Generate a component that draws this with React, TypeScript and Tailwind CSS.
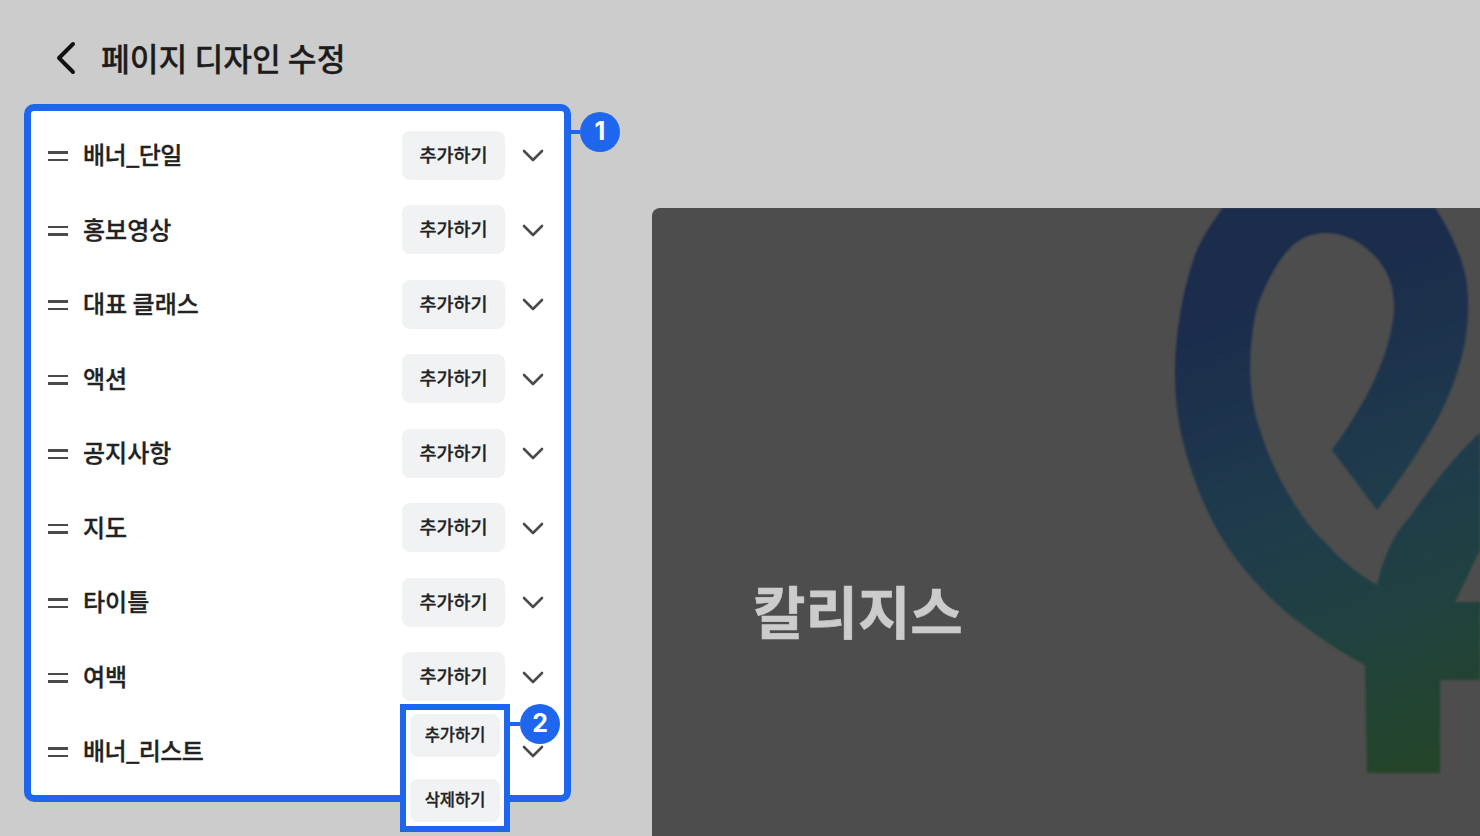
const sections = ["배너_단일", "홍보영상", "대표 클래스", "액션", "공지사항", "지도", "타이틀", "여백", "배너_리스트"];

function Chevron() {
  return (
    <svg width="24" height="24" viewBox="0 0 24 24" fill="none" stroke="#4b4b4b" strokeWidth="2.6" strokeLinecap="round" strokeLinejoin="round">
      <path d="M3 8 12 17 21 8" />
    </svg>
  );
}

function Badge({ n }: { n: number }) {
  return (
    <div className="flex h-10 w-10 items-center justify-center rounded-full bg-[#1f66ee] font-['Inter',sans-serif] text-[25px] font-bold text-white">
      {n}
    </div>
  );
}

function Row({ label, last }: { label: string; last?: boolean }) {
  return (
    <div className="flex h-[74.5px] items-center">
      <div className="mt-[2px] flex w-[20px] flex-col gap-[5px]">
        <div className="h-[2.5px] bg-[#4a4a4a]" />
        <div className="h-[2.5px] bg-[#4a4a4a]" />
      </div>
      <span className={`ml-[15px] pb-[2px] text-[24px] font-medium text-[#222222] [-webkit-text-stroke:0.3px_#222222] ${label.includes("_") ? "tracking-[-0.6px]" : ""}`}>
        {label}
      </span>
      <div className="ml-auto h-[49px] w-[103px]">
        {!last && (
          <button className="h-full w-full rounded-lg bg-[#f1f2f4] pb-[1px] text-[18.5px] font-medium text-[#222222] [-webkit-text-stroke:0.3px_#222222]">
            추가하기
          </button>
        )}
      </div>
      <div className="ml-[16px] flex w-[24px] justify-center">
        <Chevron />
      </div>
    </div>
  );
}

function Logo() {
  return (
    <svg className="absolute inset-0 h-full w-full blur-[0.8px]" viewBox="652 208 828 628" preserveAspectRatio="none">
      <defs>
        <linearGradient id="ribbon" gradientUnits="userSpaceOnUse" x1="1250" y1="300" x2="1420" y2="760">
          <stop offset="0" stopColor="#1b2c4c" />
          <stop offset="0.45" stopColor="#1f3c4c" />
          <stop offset="0.7" stopColor="#204240" />
          <stop offset="1" stopColor="#24452a" />
        </linearGradient>
      </defs>
      <path
        fill="url(#ribbon)"
        d="M1377 510 L1332 450 C1350 425 1385 375 1393 320 C1398 285 1385 262 1362 245 C1345 233 1320 228 1300 240 C1280 252 1265 285 1257 307 C1248 345 1247 395 1260 430 C1272 470 1300 520 1325 542 C1340 560 1360 575 1377 585 C1383 560 1392 535 1410 517 C1425 495 1455 455 1480 433 L1480 550 L1455 602 L1480 602 L1480 680 L1440 680 L1440 773 L1367 773 L1365 665 C1345 655 1315 635 1287 613 C1255 585 1225 550 1207 510 C1185 460 1175 420 1175 373 C1175 330 1185 280 1197 250 C1205 232 1218 215 1228 200 L1430 200 C1445 222 1468 260 1468 300 C1470 350 1450 395 1437 420 C1420 450 1400 480 1377 510 Z"
      />
    </svg>
  );
}

export default function App() {
  return (
    <div className="h-[836px] w-[1480px] overflow-hidden bg-[#cccccc] font-['Noto_Sans_CJK_KR','Noto_Sans',sans-serif]">
      <header className="flex h-[104px] items-start pl-[53px] pt-[34px]">
        <svg width="24" height="48" viewBox="0 0 24 48" fill="none" stroke="#111111" strokeWidth="4" strokeLinecap="round" strokeLinejoin="round">
          <path d="M20 10 6 24 20 38" />
        </svg>
        <h1 className="ml-[24px] text-[31.3px] leading-[48px] font-medium text-[#1c1c1c] [-webkit-text-stroke:0.3px_#1c1c1c]">페이지 디자인 수정</h1>
      </header>
      <div className="flex h-[732px] items-start pl-[24px]">
        <div className="relative">
          <div className="h-[698px] w-[547px] rounded-[10px] border-[7px] border-[#1f66ee] bg-white pl-[17px] pr-[19px] pt-[7px]">
            {sections.map((s, i) => (
              <Row key={s} label={s} last={i === sections.length - 1} />
            ))}
          </div>
          <div className="absolute left-[547px] top-[8px] flex items-center">
            <div className="h-[4px] w-[9px] bg-[#1f66ee]" />
            <Badge n={1} />
          </div>
          <div className="absolute left-[376px] top-[600px] flex h-[128px] w-[110px] flex-col gap-[22px] border-[6px] border-[#1f66ee] bg-white px-[4px] py-[4px]">
            <button className="h-[43px] rounded-lg bg-[#f1f2f4] pb-[3px] text-[16.5px] font-medium text-[#222222] [-webkit-text-stroke:0.3px_#222222]">추가하기</button>
            <button className="h-[43px] rounded-lg bg-[#f1f2f4] pb-[3px] text-[16.5px] font-medium text-[#222222] [-webkit-text-stroke:0.3px_#222222]">삭제하기</button>
          </div>
          <div className="absolute left-[486px] top-[600px] flex items-center">
            <div className="h-[4px] w-[10px] bg-[#1f66ee]" />
            <Badge n={2} />
          </div>
        </div>
        <section className="relative ml-[81px] mt-[104px] h-[628px] flex-1 overflow-hidden rounded-tl-lg bg-[#4d4d4d] pl-[101px] pt-[359px]">
          <Logo />
          <p className="relative text-[57px] leading-[84px] font-bold text-[#cccccc] [-webkit-text-stroke:0.6px_#cccccc]">칼리지스</p>
        </section>
      </div>
    </div>
  );
}
